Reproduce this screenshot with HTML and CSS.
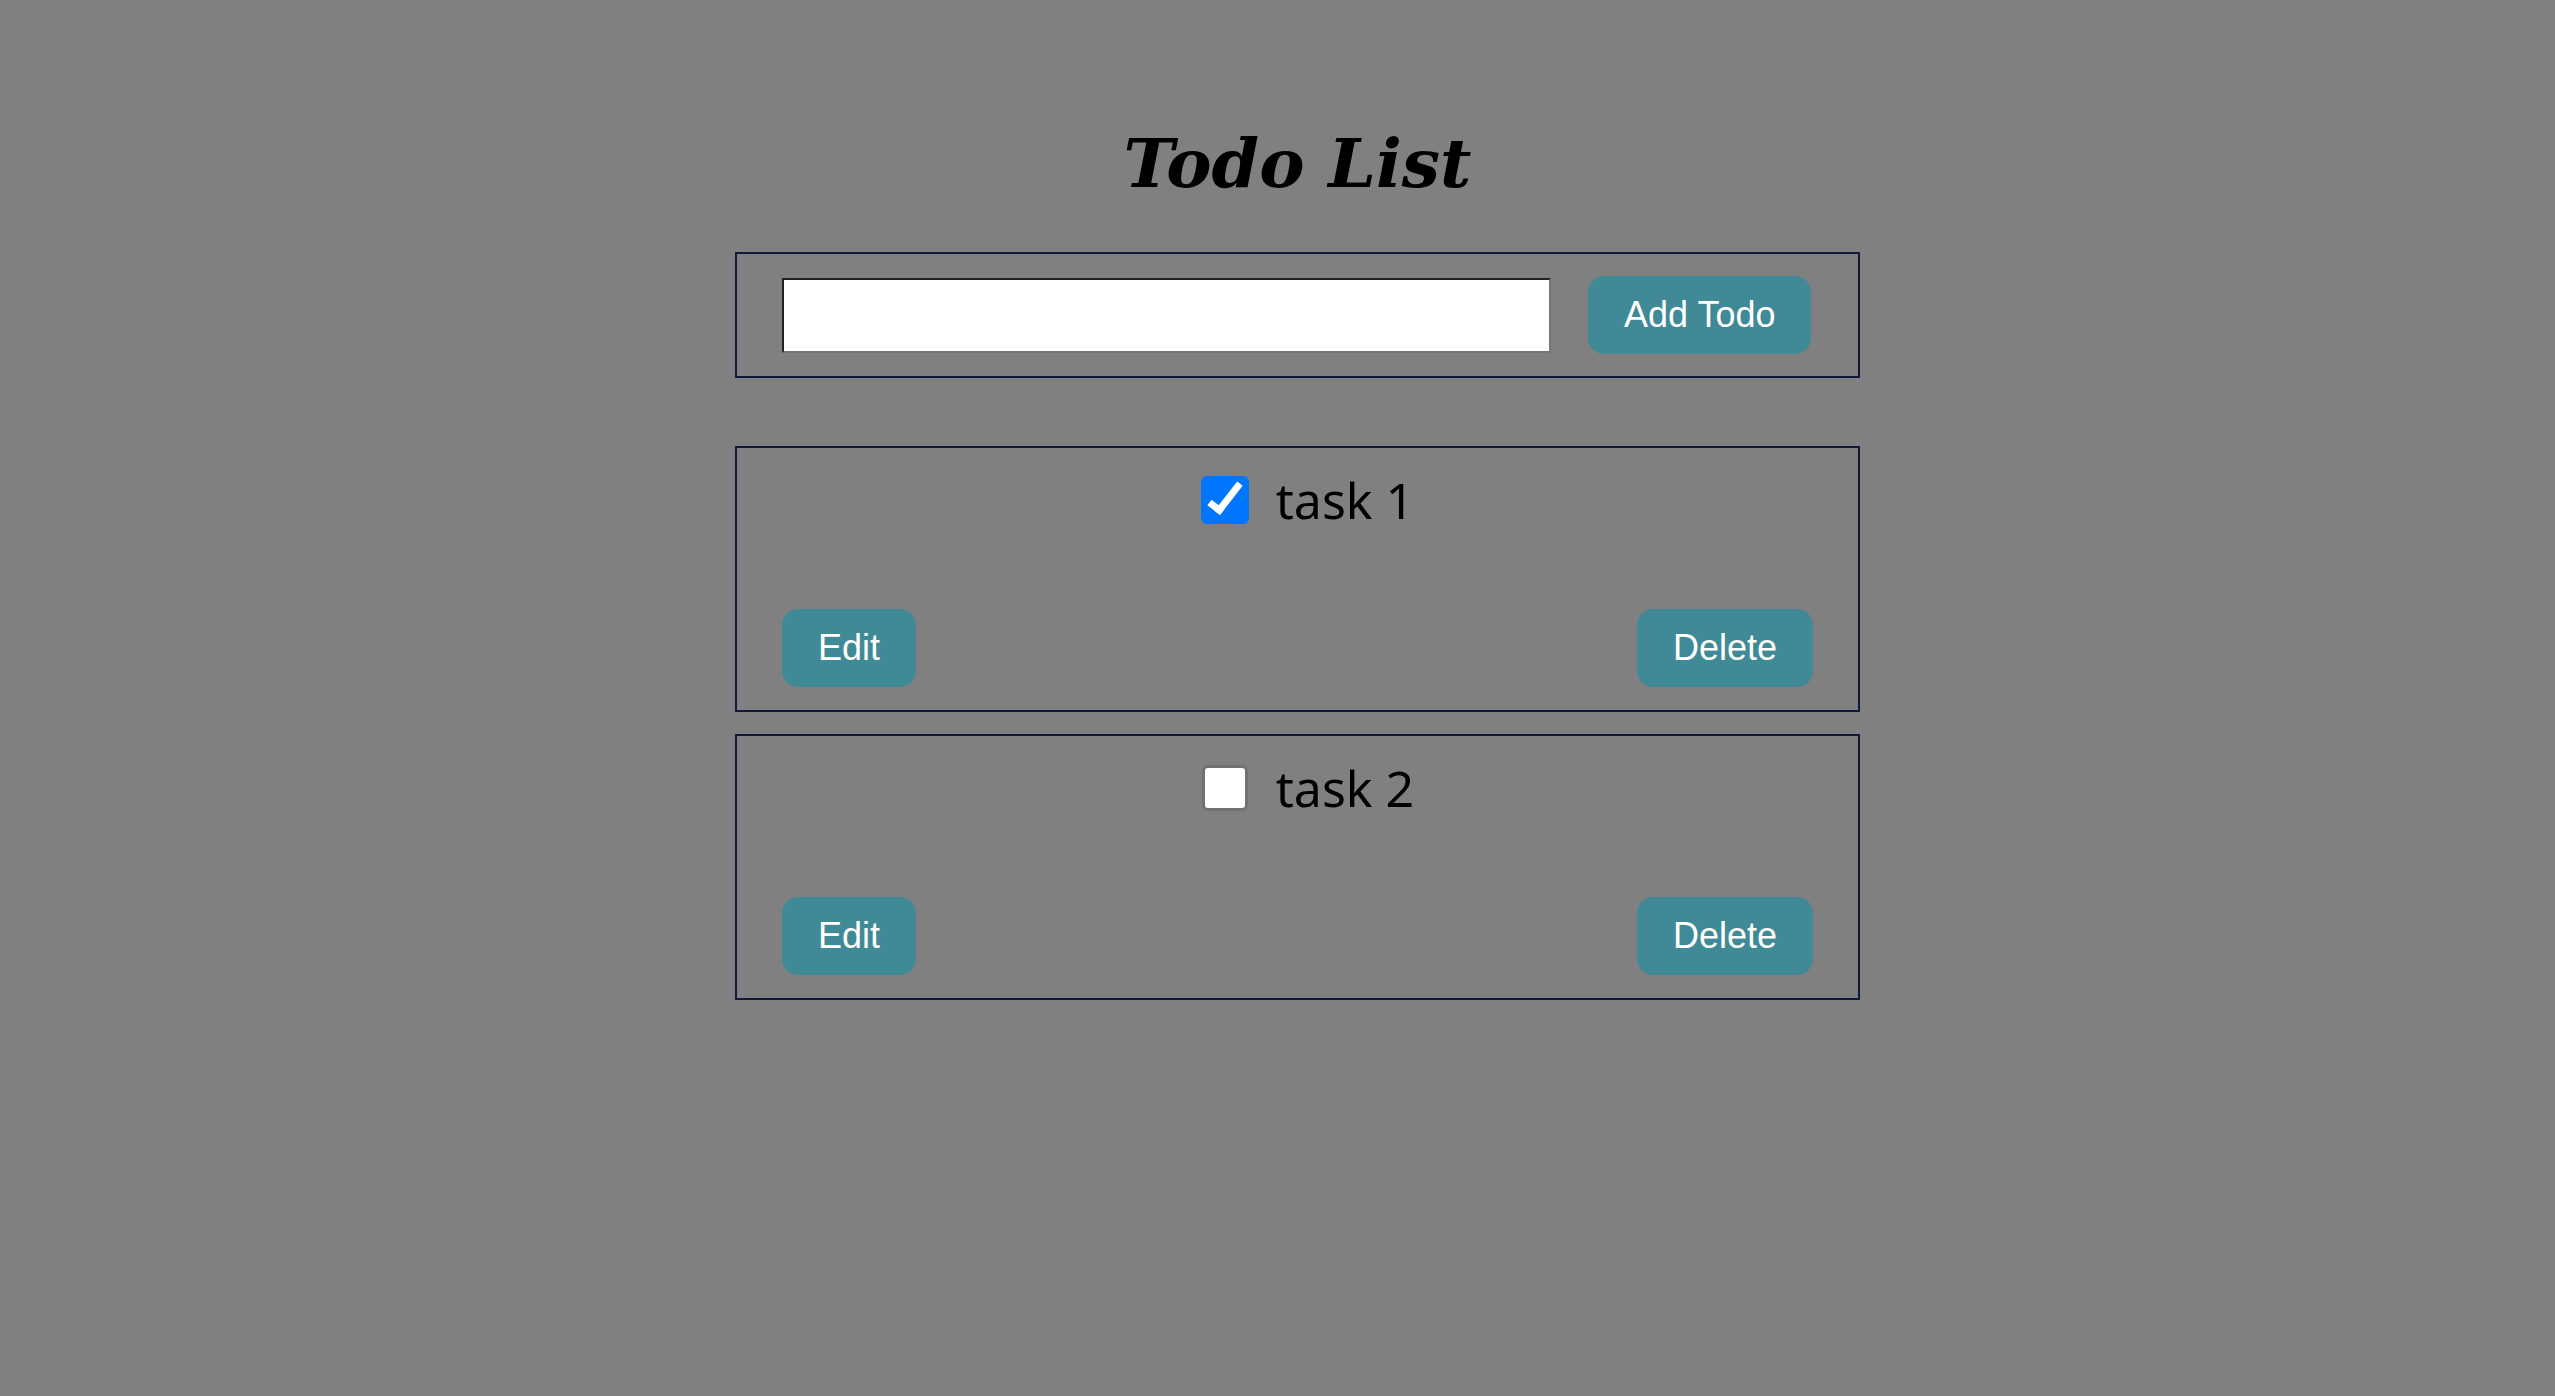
FILE: index.html
```html
<!DOCTYPE html>
<html>
<head>
<meta charset="utf-8">
<title>Todo List</title>
<link rel="stylesheet" href="styles.css">
</head>
<body>
<div class="page">
  <h1 class="title">Todo List</h1>
  <form class="add-form" onsubmit="return false">
    <input class="add-input" type="text">
    <button class="btn" type="submit">Add Todo</button>
  </form>
  <ul class="todo-list">
    <li class="todo">
      <div class="todo-row">
        <input class="todo-check" type="checkbox" checked>
        <span class="todo-text">task 1</span>
      </div>
      <div class="todo-actions">
        <button class="btn" type="button">Edit</button>
        <button class="btn" type="button">Delete</button>
      </div>
    </li>
    <li class="todo">
      <div class="todo-row">
        <input class="todo-check" type="checkbox">
        <span class="todo-text">task 2</span>
      </div>
      <div class="todo-actions">
        <button class="btn" type="button">Edit</button>
        <button class="btn" type="button">Delete</button>
      </div>
    </li>
  </ul>
</div>
</body>
</html>
```

FILE: styles.css
```css
html, body {
  margin: 0;
  padding: 0;
  background: #808080;
}

.page {
  display: flex;
  flex-direction: column;
  align-items: center;
  padding-left: 40px;
}

.title {
  margin: 131px 0 56px;
  font-family: "DejaVu Serif", "Liberation Serif", serif;
  font-style: italic;
  font-weight: bold;
  font-size: 68px;
  line-height: 65px;
  color: #000;
}

.add-form {
  box-sizing: border-box;
  width: 1125px;
  display: flex;
  align-items: center;
  gap: 37px;
  margin: 0;
  padding: 22px 45px 22px 45px;
  border: 2px solid #121a3c;
}

.add-input {
  box-sizing: border-box;
  width: 769px;
  height: 75px;
  margin: 0;
  background: #fff;
  font-size: 30px;
}

.btn {
  height: 78px;
  margin: 0;
  padding: 0 36px;
  border: none;
  border-radius: 16px;
  background: #3f8a96;
  color: #fff;
  font-family: "Liberation Sans", Arial, sans-serif;
  font-size: 36px;
  cursor: pointer;
}

.todo-list {
  list-style: none;
  margin: 68px 0 0;
  padding: 0;
  display: flex;
  flex-direction: column;
  gap: 22px;
}

.todo {
  box-sizing: border-box;
  width: 1125px;
  padding: 28px 45px 23px 45px;
  border: 2px solid #121a3c;
  display: flex;
  flex-direction: column;
  gap: 85px;
}

.todo-row {
  display: flex;
  align-items: center;
  justify-content: center;
  gap: 27px;
  padding-left: 20px;
  height: 48px;
}

.todo-check {
  -webkit-appearance: none;
  appearance: none;
  position: relative;
  box-sizing: border-box;
  width: 46px;
  height: 46px;
  margin: 1px;
  background: #fff;
  border: 3px solid #727272;
  border-radius: 6px;
}

.todo-check:checked {
  width: 48px;
  height: 48px;
  margin: 0;
  background: #0075ff;
  border: none;
}

.todo-check:checked::after {
  content: "";
  position: absolute;
  left: 16px;
  top: 1px;
  width: 9px;
  height: 30px;
  border-style: solid;
  border-color: #fff;
  border-width: 0 7px 7px 0;
  transform: rotate(38deg);
}

.todo-text {
  font-family: "Noto Sans", "Open Sans", sans-serif;
  font-size: 50px;
  line-height: 48px;
  color: #000;
}

.todo-actions {
  display: flex;
  justify-content: space-between;
  align-items: center;
}
```
